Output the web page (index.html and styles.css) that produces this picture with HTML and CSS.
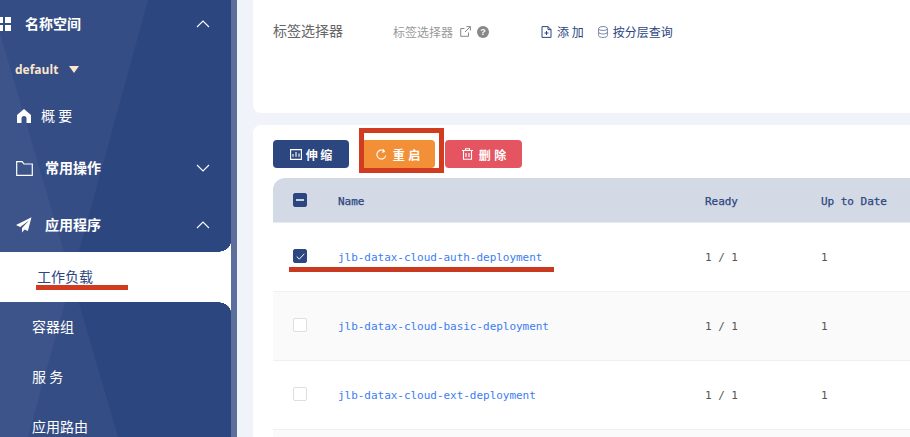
FILE: index.html
```html
<!DOCTYPE html>
<html lang="zh">
<head>
<meta charset="utf-8">
<title>工作负载</title>
<link rel="stylesheet" href="styles.css">
</head>
<body>
<div class="page">
  <aside class="sidebar">
    <div class="item ns">
      <svg class="ic-grid" width="14" height="14" viewBox="0 0 14 14"><path fill="#fff" d="M0 0h6v6H0zM8 0h6v6H8zM0 8h6v6H0zM8 8h6v6H8z"/></svg>
      <span class="label label-ns">名称空间</span>
      <svg class="chev" width="14" height="8" viewBox="0 0 14 8"><path d="M1 7l6-6 6 6" fill="none" stroke="#fff" stroke-width="1.1"/></svg>
    </div>
    <div class="item def"><span class="def-name">default</span><span class="tri"></span></div>
    <div class="item over">
      <svg width="16" height="14" viewBox="0 0 16 14"><path fill="#fff" d="M8 0L1 6v8h4.500V9.500a2.500 2.500 0 0 1 5 0V14H15V6z"/></svg>
      <span class="label label-over">概 要</span>
    </div>
    <div class="item grp">
      <svg width="17" height="15" viewBox="0 0 17 15"><path d="M.7.7h5.500l1.800 2.300h8.300v11.300H.7z" fill="none" stroke="#fff" stroke-width="1.200"/></svg>
      <span class="label label-grp">常用操作</span>
      <svg class="chev" width="14" height="8" viewBox="0 0 14 8"><path d="M1 1l6 6 6-6" fill="none" stroke="#fff" stroke-width="1.1"/></svg>
    </div>
    <div class="item grp">
      <svg class="ic-plane" width="16" height="16" viewBox="0 0 16 16"><path fill="#fff" d="M15.500.3L0 8l4.200 2L13 3.500 6 11v4.500l2.600-3.100 3.300 1.600z"/></svg>
      <span class="label label-grp">应用程序</span>
      <svg class="chev" width="14" height="8" viewBox="0 0 14 8"><path d="M1 7l6-6 6 6" fill="none" stroke="#fff" stroke-width="1.1"/></svg>
    </div>
    <div class="sub active">工作负载</div>
    <div class="sub">容器组</div>
    <div class="sub">服 务</div>
    <div class="sub">应用路由</div>
  </aside>
  <div class="rail"></div>
  <main class="main">
    <section class="card card-top">
      <span class="sel-title">标签选择器</span>
      <span class="sel-link">标签选择器</span>
      <svg class="ic-ext" width="11" height="11" viewBox="0 0 11 11"><path d="M8.500 6.500v3.800H.7V2.500h3.800M6.500.6h3.900v3.900M10.300.7L5 6" fill="none" stroke="#888" stroke-width="1"/></svg>
      <span class="help">?</span>
      <span class="act act-add">
        <svg width="11" height="12" viewBox="0 0 11 12"><path d="M1 .6h6l3 3v7.800H1zM7 .6v3h3M3.500 7h4M5.500 5v4" fill="none" stroke="#2c4680" stroke-width="1"/></svg>
        添 加
      </span>
      <span class="act act-layer">
        <svg width="10" height="12" viewBox="0 0 10 12"><ellipse cx="5" cy="2.500" rx="4.400" ry="2" fill="none" stroke="#7c8aa8"/><path d="M.6 2.500v7c0 1.100 2 2 4.400 2s4.400-.9 4.400-2v-7M.6 6c0 1.100 2 2 4.400 2s4.400-.9 4.400-2" fill="none" stroke="#7c8aa8"/></svg>
        按分层查询
      </span>
    </section>
    <section class="card card-list">
      <div class="toolbar">
        <button class="btn btn-scale">
          <svg width="12" height="11" viewBox="0 0 12 11"><path d="M.6.6h10.800v9.800H.6zM3 7.800V5M6 7.800V3M9 7.800V4.500" fill="none" stroke="#fff" stroke-width="1.100"/></svg>
          伸 缩
        </button>
        <button class="btn btn-restart">
          <svg width="11" height="11" viewBox="0 0 11 11"><path d="M9.800 6.500A4.500 4.500 0 1 1 8 1.800M7.200.2l1.200 2.400-2.500.6" fill="none" stroke="#fff" stroke-width="1.100"/></svg>
          重 启
        </button>
        <button class="btn btn-delete">
          <svg width="11" height="12" viewBox="0 0 11 12"><path d="M0 2.500h11M3.500 2.500V.7h4v1.800M1.500 2.500v8.800h8V2.500M4 5v4M7 5v4" fill="none" stroke="#fff" stroke-width="1.100"/></svg>
          删 除
        </button>
      </div>
      <div class="table">
        <div class="row head">
          <span class="c-check"><span class="box on"><span class="dash"></span></span></span>
          <span class="c-name">Name</span>
          <span class="c-ready">Ready</span>
          <span class="c-up">Up to Date</span>
        </div>
        <div class="row">
          <span class="c-check"><span class="box on"><svg width="9" height="7" viewBox="0 0 9 7"><path d="M.7 3.500l2.600 2.600L8.300.8" fill="none" stroke="#fff" stroke-width="1"/></svg></span></span>
          <a class="c-name link">jlb-datax-cloud-auth-deployment</a>
          <span class="c-ready">1 / 1</span>
          <span class="c-up">1</span>
        </div>
        <div class="row alt">
          <span class="c-check"><span class="box"></span></span>
          <a class="c-name link">jlb-datax-cloud-basic-deployment</a>
          <span class="c-ready">1 / 1</span>
          <span class="c-up">1</span>
        </div>
        <div class="row">
          <span class="c-check"><span class="box"></span></span>
          <a class="c-name link">jlb-datax-cloud-ext-deployment</a>
          <span class="c-ready">1 / 1</span>
          <span class="c-up">1</span>
        </div>
        <div class="row alt"></div>
      </div>
    </section>
  </main>
  <div class="mark mark-box"></div>
  <div class="mark mark-line-name"></div>
  <div class="mark mark-line-side"></div>
</div>
</body>
</html>
```
FILE: styles.css
```css
* { box-sizing: border-box; }
html, body { margin: 0; height: 100%; overflow: hidden; }
body { font-family: "Noto Sans CJK SC", "Noto Sans", sans-serif; background: #f0f3f9; }
.page { position: relative; display: flex; width: 910px; height: 437px; overflow: hidden; }

/* sidebar */
.sidebar { position: relative; flex: none; width: 231px; height: 437px; background: #2c4680; color: #fff; font-size: 14px; }
.sidebar::before, .sidebar::after { content: ""; position: absolute; inset: 0; background: rgba(255,255,255,.045); pointer-events: none; }
.sidebar::before { clip-path: polygon(0 0, 148px 0, 28px 437px, 0 437px); }
.sidebar::after { clip-path: polygon(0 33px, 118px 437px, 0 437px); }
.item { position: relative; z-index: 1; display: flex; align-items: center; padding-left: 16px; }
.chev { position: absolute; left: 196px; top: 50%; margin-top: -4px; }
.label { line-height: 20px; padding-bottom: 2px; }
.ns { height: 48px; padding-left: 0; }
.ic-grid { margin-left: -3px; }
.label-ns { margin-left: 14px; font-weight: 700; }
.def { height: 42px; padding-left: 15px; color: #fbe6cc; }
.def-name { font-family: "Open Sans", sans-serif; font-size: 12px; font-weight: 700; }
.tri { margin-left: 11px; border-style: solid; border-width: 7px 5.500px 0; border-color: #fbe6cc transparent transparent; }
.over { height: 48px; padding-top: 3px; padding-left: 16px; }
.label-over { margin-left: 9px; }
.grp { height: 54px; margin-top: 3px; }
.label-grp { margin-left: 12px; font-weight: 700; }
.ic-plane { margin-right: 1px; }
.sub { position: relative; z-index: 1; height: 50px; line-height: 48px; padding-left: 32px; }
.active { padding-left: 37px; background: #fff; color: #2c4680; }
.active::before, .active::after { content: ""; position: absolute; right: 0; width: 14px; height: 10px; }
.active::before { bottom: 100%; background: radial-gradient(ellipse 14px 10px at 0 0, transparent 97%, #fff 100%); }
.active::after { top: 100%; background: radial-gradient(ellipse 14px 10px at 0 100%, transparent 97%, #fff 100%); }
.rail { flex: none; width: 6px; background: #5b6f9a; }

/* main */
.main { flex: none; width: 700px; padding-left: 16px; }
.card { background: #fff; border-radius: 8px 0 0 8px; }
.card-top { display: flex; align-items: center; height: 113px; padding: 0 0 50px 20px; border-radius: 0 0 0 8px; }
.sel-title { width: 120px; padding-bottom: 3px; font-size: 14px; color: #666; }
.sel-link { font-size: 12px; color: #999; }
.ic-ext { margin-left: 7px; }
.help { display: flex; align-items: center; justify-content: center; width: 12px; height: 12px; margin-left: 6px; border-radius: 50%; background: #888; color: #fff; font: 700 9px "Liberation Sans", sans-serif; }
.act { display: flex; align-items: center; gap: 5px; font-size: 12px; color: #2c4680; }
.act-add { margin-left: 52px; }
.act-layer { margin-left: 14px; }

.card-list { height: 320px; margin-top: 12px; padding: 15px 0 0 20px; }
.toolbar { display: flex; gap: 10px; height: 28px; }
.btn { display: flex; align-items: center; justify-content: center; gap: 4px; width: 76px; height: 28px; padding: 0; border: 0; border-radius: 4px; color: #fff; font-family: inherit; font-size: 12px; font-weight: 700; }
.btn-scale { background: #2c4680; }
.btn-restart { gap: 6px; padding-left: 2px; word-spacing: 1px; background: #f39037; }
.btn-delete { gap: 6px; width: 77px; padding-left: 1px; word-spacing: 1px; background: #e45561; }

/* table */
.table { margin-top: 10px; font: 11px "DejaVu Sans Mono", monospace; letter-spacing: -.03px; color: #555; }
.row { display: flex; align-items: center; height: 69px; border-bottom: 1px solid #eef0f6; }
.alt { background: #fafafb; }
.head { height: 45px; border-radius: 12px 0 0 0; border-bottom: 1px solid #e8ebf2; background: #d3d9e5; color: #2c4680; -webkit-text-stroke: .25px #2c4680; }
.head .c-name, .head .c-ready, .head .c-up { padding-top: 2px; }
.c-check { flex: none; display: flex; width: 65px; padding-left: 20px; }
.row:not(.head) .c-check { padding-bottom: 2px; }
.c-name { flex: none; width: 367px; }
.c-ready { flex: none; width: 116px; }
.link { color: #3c7df0; }
.box { display: flex; align-items: center; justify-content: center; width: 14px; height: 14px; border: 1px solid #dcdfe6; border-radius: 2px; background: #fff; }
.box.on { border-color: #2c4680; background: #2c4680; }
.dash { width: 8px; height: 2px; background: #c9d1e2; }

/* hand-drawn red annotations lying over the screenshot */
.mark { position: absolute; z-index: 2; }
.mark-box { left: 359px; top: 128px; width: 85px; height: 45px; border: 5px solid #d13c20; }
.mark-line-name { left: 289px; top: 267px; width: 265px; height: 5px; background: #c9391f; }
.mark-line-side { left: 36px; top: 285px; width: 92px; height: 5px; background: #d13c20; }
```
